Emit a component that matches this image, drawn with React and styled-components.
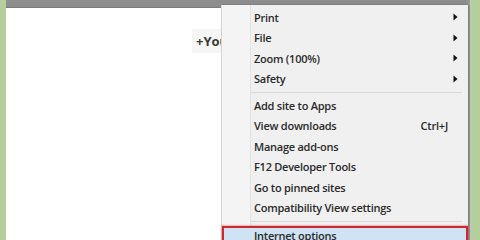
import styled, { createGlobalStyle } from "styled-components";

const GlobalStyle = createGlobalStyle`
  html, body {
    margin: 0;
    padding: 0;
    background: #fff;
  }
`;

const menuItems = [
  { label: "Print", sub: true },
  { label: "File", sub: true },
  { label: "Zoom (100%)", sub: true },
  { label: "Safety", sub: true },
  { sep: true },
  { label: "Add site to Apps" },
  { label: "View downloads", shortcut: "Ctrl+J" },
  { label: "Manage add-ons" },
  { label: "F12 Developer Tools" },
  { label: "Go to pinned sites" },
  { label: "Compatibility View settings" },
  { sep: true },
  { label: "Internet options", marked: true },
];

const App = () => {
  return (
    <Screen>
      <GlobalStyle />
      <Strip />
      <Browser>
        <TopBar />
        <Page>
          <YouLink>+You</YouLink>
        </Page>
        <Menu>
          {menuItems.map((item, i) =>
            item.sep ? (
              <Separator key={i} />
            ) : (
              <Item key={i} $marked={item.marked}>
                <Label>{item.label}</Label>
                <Shortcut>{item.shortcut}</Shortcut>
                <Arrow>
                  {item.sub && (
                    <svg width="5" height="8" viewBox="0 0 5 8">
                      <path d="M0.5 0.5 L4.5 4 L0.5 7.5 Z" fill="#111" />
                    </svg>
                  )}
                </Arrow>
              </Item>
            )
          )}
        </Menu>
      </Browser>
      <Strip $right />
    </Screen>
  );
};

const Screen = styled.div`
  width: 480px;
  height: 240px;
  display: flex;
  overflow: hidden;
  background: #b6cf9e;
`;

const Strip = styled.div`
  width: ${(p) => (p.$right ? "9px" : "6px")};
  flex-shrink: 0;
  background: #b4ce9c;
  border-left: ${(p) => (p.$right ? "1px solid #c9c9c9" : "none")};
`;

const Browser = styled.div`
  flex: 1;
  position: relative;
  display: flex;
  flex-direction: column;
  background: #fff;
  border-right: 2px solid #9a9a9a;
`;

const TopBar = styled.div`
  height: 7px;
  flex-shrink: 0;
  background: #8d8d8d;
  border-bottom: 1px solid #7a7a7a;
`;

const Page = styled.div`
  flex: 1;
  position: relative;
  padding: 21px 0 0 186px;
  background: #fff;
`;

const YouLink = styled.span`
  display: inline-block;
  padding: 3px 4px;
  background: #f6f6f6;
  font-family: "Open Sans", "Liberation Sans", sans-serif;
  font-weight: 700;
  font-size: 13px;
  color: #3a3a3a;
`;

const Menu = styled.div`
  position: absolute;
  top: 5px;
  left: 215px;
  width: 247px;
  height: 240px;
  padding-top: 2px;
  box-sizing: border-box;
  background: linear-gradient(to right, #f4f4f4 0, #f4f4f4 28px, #e2e2e2 28px, #e2e2e2 29px, #f0f0f0 29px);
  border-left: 1px solid #d6d6d6;
  box-shadow: 1px 0 2px rgba(0, 0, 0, 0.25);
  font-family: "Open Sans", "Liberation Sans", sans-serif;
  font-size: 11px;
  color: #2a2a2a;
`;

const Item = styled.div`
  height: 20.5px;
  display: grid;
  grid-template-columns: 1fr auto 14px;
  align-items: center;
  padding: 0 6px 0 32px;
  box-sizing: border-box;
  ${(p) =>
    p.$marked &&
    `
    margin-top: 2px;
    height: 22px;
    padding-bottom: 3px;
    background: #cfe3f5;
    border: 2px solid #cc2a30;
    padding-left: 30px;
    box-shadow: 0 0 1px 1px rgba(220, 90, 90, 0.35);
  `}
`;

const Label = styled.span`
  font-weight: 600;
  white-space: nowrap;
  letter-spacing: -0.25px;
`;

const Shortcut = styled.span`
  font-weight: 600;
  letter-spacing: -0.2px;
`;

const Arrow = styled.span`
  display: flex;
  justify-content: center;
  align-items: center;
`;

const Separator = styled.div`
  height: 6px;
  margin-left: 29px;
  margin-right: 6px;
  display: flex;
  align-items: center;
  &::after {
    content: "";
    flex: 1;
    height: 1px;
    background: #d9d9d9;
  }
`;

export default App;
